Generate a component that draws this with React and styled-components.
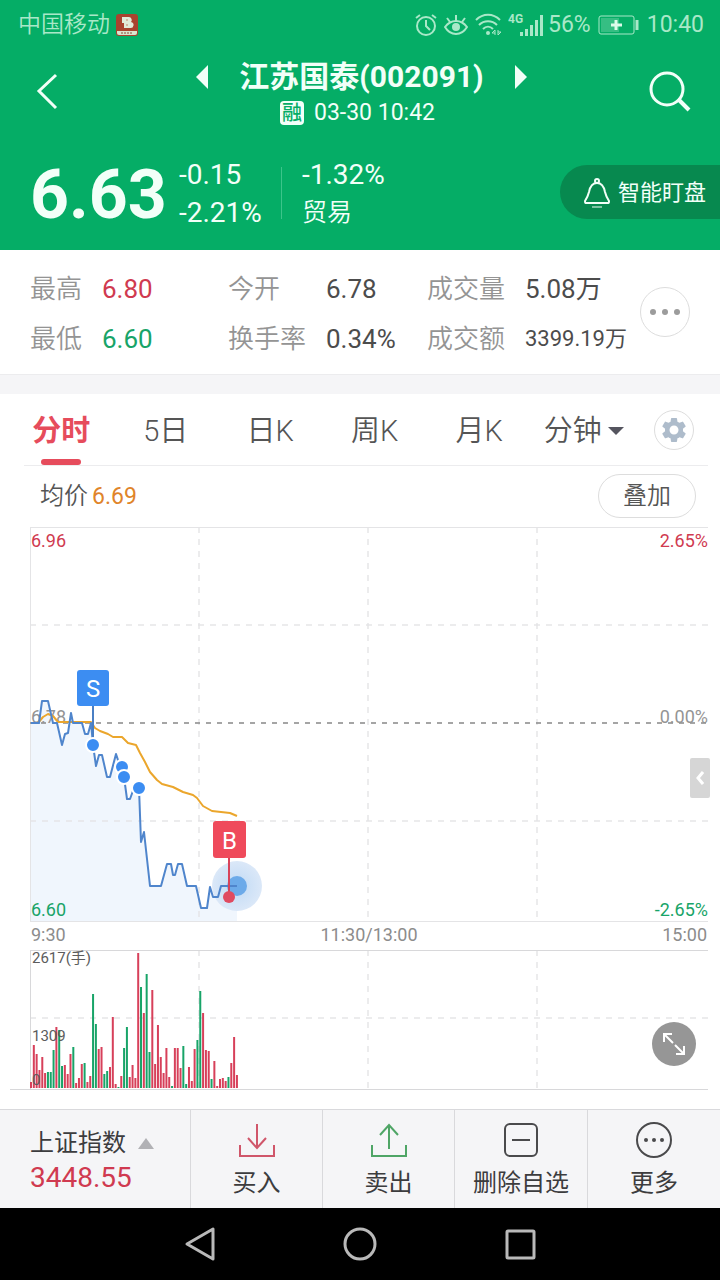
import React, { useState } from 'react';
import styled, { createGlobalStyle } from 'styled-components';
import { MdSettings } from 'react-icons/md';

const color = {
  green: '#05ad66',
  greenDark: '#07894f',
  red: '#d03a50',
  up: '#d7405a',
  down: '#18a468',
  text: '#555555',
  label: '#949494',
  line: '#e4e4e6',
  panel: '#f5f5f7',
};

const GlobalStyle = createGlobalStyle`
  * { box-sizing: border-box; }
  body {
    margin: 0;
    background: #fff;
    color: ${color.text};
    font-family: Roboto, "Noto Sans CJK SC", sans-serif;
  }
  button { border: 0; padding: 0; background: none; color: inherit; font: inherit; cursor: pointer; }
  svg { display: block; }
`;

const Page = styled.div`
  display: flex;
  flex-direction: column;
  min-height: 100vh;
`;

/* ---------- green header ---------- */

const Header = styled.header`
  background: ${color.green};
  color: #f2fff8;
`;

const StatusBar = styled.div`
  display: flex;
  align-items: center;
  justify-content: space-between;
  height: 50px;
  padding: 0 16px 0 18px;
  color: #a9e8c8;
  font-size: 23px;
  line-height: 28px;
`;

const StatusGroup = styled.div`
  display: flex;
  align-items: center;
  gap: ${(p) => p.$gap}px;
  font-weight: ${(p) => (p.$light ? 350 : 400)};
`;

const TitleBar = styled.div`
  display: flex;
  align-items: center;
  justify-content: space-between;
  height: 86px;
  padding: 0 29px 0 36px;
`;

const IconButton = styled.button`
  flex: none;
  width: ${(p) => p.$size}px;
  height: ${(p) => p.$size}px;
`;

const HeaderAction = styled(IconButton)`
  margin-bottom: 4px;
`;

const TitleBlock = styled.div`
  display: flex;
  flex-direction: column;
  align-items: center;
`;

const TitleLine = styled.div`
  display: flex;
  align-items: center;
  gap: 31px;
`;

const Title = styled.h1`
  margin: 0;
  font-size: 30px;
  line-height: 40px;
  font-weight: 700;
`;

const SubLine = styled.div`
  display: flex;
  align-items: center;
  gap: 10px;
  padding-right: 8px;
  font-size: 23px;
  line-height: 32px;
`;

const MarginTag = styled.span`
  width: 24px;
  height: 24px;
  border-radius: 4px;
  background: #f2fff8;
  color: ${color.green};
  font-size: 20px;
  line-height: 24px;
  font-weight: 500;
  text-align: center;
`;

const Quote = styled.div`
  display: flex;
  align-items: center;
  height: 114px;
  padding-left: 30px;
`;

const Price = styled.strong`
  width: 149px;
  padding-top: 4px;
  font-size: 68px;
  line-height: 76px;
  font-weight: 700;
`;

const ChangeColumn = styled.div`
  width: ${(p) => p.$width}px;
  padding-top: 2px;
  font-size: 28px;
  line-height: 38px;
`;

const Industry = styled.div`
  font-size: 25px;
  font-weight: 350;
`;

const Divider = styled.span`
  width: 1px;
  height: 52px;
  margin-right: 20px;
  background: #3cc48a;
`;

const WatchButton = styled.button`
  display: flex;
  align-items: center;
  gap: 8px;
  height: 54px;
  margin: 0 0 2px auto;
  padding: 2px 14px 0 24px;
  border-radius: 27px 0 0 27px;
  background: ${color.greenDark};
  font-size: 22px;
  line-height: 30px;
`;

/* ---------- statistics ---------- */

const Stats = styled.section`
  display: flex;
  align-items: center;
  height: 125px;
  padding: 0 30px;
  border-bottom: 1px solid #ececee;
`;

const StatList = styled.dl`
  flex: 1;
  display: grid;
  grid-template-columns: 72fr 126fr 98fr 101fr 98fr 115fr;
  row-gap: 14px;
  margin: 0;
  padding-top: 4px;
  font-size: 26px;
  line-height: 36px;
  white-space: nowrap;
`;

const StatLabel = styled.dt`
  color: ${color.label};
  font-weight: 350;
`;

const StatValue = styled.dd`
  margin: 0;
  color: ${(p) => p.$color || '#4c4c4c'};
  font-size: ${(p) => (p.$small ? 22 : 26)}px;
`;

const MoreButton = styled.button`
  display: grid;
  place-items: center;
  flex: none;
  width: 50px;
  height: 50px;
  border: 1px solid #dddddd;
  border-radius: 50%;
`;

const Band = styled.div`
  height: 19px;
  background: ${color.panel};
`;

/* ---------- chart ---------- */

const Tabs = styled.nav`
  display: flex;
  align-items: stretch;
  height: 72px;
  margin: 0 12px 0 24px;
  border-bottom: 1px solid #ececee;
`;

const TabList = styled.div`
  flex: 1;
  display: grid;
  grid-template-columns: repeat(6, 1fr);
  margin: 0 4px 0 -15px;
`;

const Tab = styled.button`
  position: relative;
  display: flex;
  align-items: center;
  justify-content: center;
  gap: 6px;
  padding-top: 2px;
  color: ${(p) => (p.$active ? '#e64c5c' : color.text)};
  font-size: 29px;
  line-height: 40px;
  font-weight: ${(p) => (p.$active ? 700 : 350)};
  &::after {
    content: '';
    display: ${(p) => (p.$active ? 'block' : 'none')};
    position: absolute;
    left: calc(50% - 20px);
    bottom: 0;
    width: 40px;
    height: 6px;
    border-radius: 3px;
    background: #e64c5c;
  }
`;

const GearButton = styled.button`
  display: grid;
  place-items: center;
  align-self: center;
  width: 40px;
  height: 40px;
  margin: 0 14px;
  border: 1px solid #dddddd;
  border-radius: 50%;
  color: #aebccb;
`;

const AverageRow = styled.div`
  display: flex;
  align-items: center;
  justify-content: space-between;
  height: 61px;
  padding: 0 24px 0 40px;
  font-size: 24px;
  line-height: 32px;
  font-weight: 350;
`;

const Average = styled.span`
  margin-left: 4px;
  color: #e0842a;
  font-size: 23px;
  font-weight: 400;
`;

const OverlayButton = styled.button`
  height: 44px;
  margin-bottom: 2px;
  padding: 0 24px;
  border: 1px solid #dddddd;
  border-radius: 22px;
`;

const ChartArea = styled.section`
  position: relative;
  padding: 0 12px 0 30px;
  svg text { font-family: Roboto, "Noto Sans CJK SC", sans-serif; }
`;

const Plot = styled.svg`
  width: 100%;
  height: auto;
  overflow: visible;
`;

const TimeAxis = styled.div`
  display: grid;
  grid-template-columns: 1fr auto 1fr;
  align-items: center;
  height: 28px;
  padding: 0 1px 2px;
  color: #8c8c8c;
  font-size: 18px;
  line-height: 24px;
  > :last-child { text-align: right; }
`;

const DrawerHandle = styled.button`
  position: absolute;
  right: 10px;
  top: 231px;
  display: grid;
  place-items: center;
  width: 20px;
  height: 40px;
  border-radius: 2px;
  background: #d6d6d6;
`;

const ExpandButton = styled.button`
  position: absolute;
  right: 24px;
  bottom: 24px;
  display: grid;
  place-items: center;
  width: 44px;
  height: 44px;
  border-radius: 50%;
  background: #969696;
`;

/* ---------- bottom bars ---------- */

const Toolbar = styled.footer`
  display: grid;
  grid-template-columns: 190fr 132fr 132fr 133fr 133fr;
  height: 99px;
  margin-top: auto;
  border-top: 1px solid #d9d9dc;
  background: ${color.panel};
  color: #3c3c3e;
`;

const IndexButton = styled.button`
  padding: 2px 0 0 30px;
  text-align: left;
`;

const IndexName = styled.span`
  display: flex;
  align-items: center;
  gap: 12px;
  font-size: 24px;
  line-height: 36px;
`;

const IndexValue = styled.span`
  display: block;
  color: ${color.red};
  font-size: 28px;
  line-height: 34px;
`;

const Action = styled.button`
  display: flex;
  flex-direction: column;
  align-items: center;
  gap: 6px;
  padding-top: 11px;
  border-left: 1px solid #d9d9dc;
  font-size: 24px;
  line-height: 36px;
`;

const NavBar = styled.nav`
  display: flex;
  align-items: center;
  justify-content: center;
  gap: 120px;
  height: 72px;
  background: #000;
`;

/* ---------- data ---------- */

const stats = [
  { label: '最高', value: '6.80', color: color.red },
  { label: '今开', value: '6.78' },
  { label: '成交量', value: '5.08万' },
  { label: '最低', value: '6.60', color: color.down },
  { label: '换手率', value: '0.34%' },
  { label: '成交额', value: '3399.19万', small: true },
];

const tabs = ['分时', '5日', '日K', '周K', '月K', '分钟'];

const pricePoints =
  '1,196 9,196 12,174 18,174 23,196 27,196 32,218 35,207 38,206 41,186 43,196 52,196 55,207 58,207 61,196 63,218 66,239 69,228 72,228 77,250 80,250 86,227 90,239 94,250 97,272 100,272 104,261 109,261 111,315 114,305 120,359 131,359 137,337 141,337 143,348 145,348 148,337 152,337 157,359 166,359 171,381 177,381 180,360 183,370 188,370 191,359 199,359 207,359';

const averagePoints =
  '1,196 8,196 13,190 18,187 23,189 28,195 37,195 61,195 65,201 70,204 78,207 83,210 92,210 98,216 106,218 110,226 115,235 120,245 127,253 132,257 143,260 153,265 163,268 167,271 173,279 182,284 200,286 207,289';

const tradeDots = [[63, 218], [92, 240], [94, 250], [109, 261]];

const volumes = [
  6, 43, 34, 18, 31, 15, 16, 16, 38, 61, 58, 22, 23, 14, 34, 41, 5, 10, 24, 25, 6, 12, 94, 64, 39,
  41, 14, 17, 21, 71, 4, 1, 12, 40, 61, 11, 23, 10, 135, 101, 75, 114, 36, 98, 24, 63, 31, 15, 40,
  11, 2, 40, 40, 20, 42, 4, 21, 7, 39, 48, 97, 75, 38, 37, 9, 27, 2, 9, 10, 7, 11, 25, 51, 13,
];

const fallingBars = new Set([
  6, 7, 8, 10, 11, 15, 19, 22, 23, 26, 27, 31, 33, 34, 39, 41, 42, 50, 54, 55, 59, 60, 64, 70,
]);

/* ---------- drawings ---------- */

const AppBadge = () => (
  <svg width="22" height="22" viewBox="0 0 22 22" aria-hidden="true">
    <rect width="22" height="22" rx="3" fill="#a9432f" />
    <path d="M1 17h20v2a2 2 0 0 1-2 2H3a2 2 0 0 1-2-2z" fill="#d9e5cf" />
    <path d="M5 19h12" stroke="#8a4a38" strokeWidth="1" strokeDasharray="2 1" />
    <path d="M6 3h7a3 3 0 0 1 2 5 3 3 0 0 1-1 6H8V9H6z" fill="#e2ebda" />
    <path d="M10 6h2M10 11h2" stroke="#c58873" strokeWidth="1" />
  </svg>
);

const AlarmIcon = () => (
  <svg width="22" height="24" viewBox="0 0 22 24" fill="none" stroke="currentColor" strokeWidth="2" aria-hidden="true">
    <circle cx="11" cy="13" r="9" />
    <path d="M11 7v6l4 4M1 5l4-3M21 5l-4-3" />
  </svg>
);

const EyeIcon = () => (
  <svg width="24" height="24" viewBox="0 0 24 24" fill="none" stroke="currentColor" strokeWidth="2" aria-hidden="true">
    <path d="M1 14c3-4 6-6 11-6s8 2 11 6c-3 5-6 7-11 7s-8-2-11-7z" />
    <circle cx="12" cy="14" r="4" fill="currentColor" stroke="none" />
    <path d="M12 8V2M6 9L3 5M18 9l3-4" />
  </svg>
);

const WifiIcon = () => (
  <svg width="26" height="24" viewBox="0 0 26 24" fill="none" stroke="currentColor" strokeWidth="2" aria-hidden="true">
    <path d="M1 7c7-7 17-7 24 0M4 12c5-5 13-5 18 0M8 16c3-3 7-3 10 0" />
    <circle cx="13" cy="20" r="2" fill="currentColor" stroke="none" />
    <path d="M20 22v-5l-3 3h3M23 17v5l3-3h-3" strokeWidth="1" />
  </svg>
);

const SignalIcon = () => (
  <svg width="36" height="26" viewBox="0 0 36 26" fill="currentColor" aria-hidden="true">
    <text x="0" y="11" fontSize="12" fontWeight="700" fontFamily="Roboto, sans-serif">4G</text>
    <rect x="12" y="20" width="3" height="4" />
    <rect x="17" y="17" width="3" height="7" />
    <rect x="22" y="13" width="3" height="11" />
    <rect x="27" y="8" width="3" height="16" />
    <rect x="32" y="3" width="3" height="21" />
  </svg>
);

const BatteryIcon = () => (
  <svg width="42" height="20" viewBox="0 0 42 20" fill="none" aria-hidden="true">
    <rect x="1" y="1" width="35" height="18" rx="2" stroke="currentColor" strokeWidth="1" />
    <rect x="3" y="3" width="18" height="14" fill="currentColor" opacity="0.300" />
    <path d="M18 5v10M13 10h11" stroke="#dcfbea" strokeWidth="3" />
    <path d="M39 5v10" stroke="currentColor" strokeWidth="3" />
  </svg>
);

const BackIcon = () => (
  <svg width="24" height="40" viewBox="0 0 24 40" fill="none" stroke="currentColor" strokeWidth="3" aria-hidden="true">
    <path d="M20 4L3 20l17 17" />
  </svg>
);

const SearchIcon = () => (
  <svg width="44" height="44" viewBox="0 0 44 44" fill="none" stroke="currentColor" aria-hidden="true">
    <circle cx="20" cy="20" r="16" strokeWidth="3" />
    <path d="M31 30l11 11" strokeWidth="4" />
  </svg>
);

const StepIcon = ({ next }) => (
  <svg width="12" height="24" viewBox="0 0 12 24" fill="currentColor" aria-hidden="true">
    <path d={next ? 'M0 0l12 12L0 24z' : 'M12 0L0 12l12 12z'} />
  </svg>
);

const BellIcon = () => (
  <svg width="26" height="30" viewBox="0 0 26 30" fill="none" stroke="currentColor" strokeWidth="2" strokeLinejoin="round" aria-hidden="true">
    <circle cx="13" cy="3" r="2" />
    <path d="M13 5c-5 0-7 4-8 9-1 4-2 6-4 9 0 2 0 2 2 2h20c2 0 2 0 2-2-2-3-3-5-4-9-1-5-3-9-8-9z" />
    <path d="M8 29h10" strokeWidth="1" />
  </svg>
);

const DotsIcon = () => (
  <svg width="32" height="6" viewBox="0 0 32 6" fill="#9c9c9c" aria-hidden="true">
    <circle cx="4" cy="3" r="3" />
    <circle cx="16" cy="3" r="3" />
    <circle cx="28" cy="3" r="3" />
  </svg>
);

const TrayIcon = ({ up }) => (
  <svg width="38" height="38" viewBox="0 0 38 38" fill="none" stroke={up ? '#4fa566' : '#d0566a'} strokeWidth="2" aria-hidden="true">
    <path d="M2 24v11h34V24" />
    <path d={up ? 'M19 28V4M10 14l9-10 9 10' : 'M19 3v24M10 17l9 10 9-10'} />
  </svg>
);

const RemoveIcon = () => (
  <svg width="38" height="38" viewBox="0 0 38 38" fill="none" stroke="#4a4a4c" strokeWidth="2" aria-hidden="true">
    <rect x="3" y="3" width="32" height="32" rx="5" />
    <path d="M10 19h18" />
  </svg>
);

const MoreIcon = () => (
  <svg width="38" height="38" viewBox="0 0 38 38" fill="none" stroke="#4a4a4c" strokeWidth="2" aria-hidden="true">
    <circle cx="19" cy="19" r="17" />
    <g fill="#4a4a4c" stroke="none">
      <circle cx="11" cy="19" r="2" />
      <circle cx="19" cy="19" r="2" />
      <circle cx="27" cy="19" r="2" />
    </g>
  </svg>
);

const Flag = ({ x, y, width, height, fill, letter }) => (
  <g>
    <rect x={x} y={y} width={width} height={height} rx="3" fill={fill} />
    <text x={x + width / 2} y={y + height / 2 + 9} fontSize="24" fill="#fff" textAnchor="middle">
      {letter}
    </text>
  </g>
);

const Grid = ({ height, rows }) => (
  <g fill="none" stroke={color.line} strokeWidth="2" strokeOpacity="0.700" strokeDasharray="6 6">
    {[169, 338, 507].map((x) => (
      <path key={x} d={`M${x} 0V${height}`} />
    ))}
    {rows.map((y) => (
      <path key={y} d={`M0 ${y}H678`} />
    ))}
  </g>
);

const PriceChart = () => (
  <Plot viewBox="0 0 678 395" role="img" aria-label="分时走势">
    <defs>
      <radialGradient id="pulse">
        <stop offset="0" stopColor="#c0daf5" />
        <stop offset="1" stopColor="#dbe8f8" />
      </radialGradient>
    </defs>
    <polygon points={`1,394 ${pricePoints} 207,394`} fill="#f0f6fd" />
    <Grid height={394} rows={[98, 294]} />
    <g shapeRendering="crispEdges" fill={color.line}>
      <rect width="678" height="1" />
      <rect y="394" width="678" height="1" />
      <rect width="1" height="394" />
    </g>
    <path d="M0 196H678" stroke="#8f8f8f" strokeWidth="2" strokeOpacity="0.800" strokeDasharray="5 6" />
    <g fontSize="18">
      <text x="1" y="20" fill={color.red}>6.96</text>
      <text x="678" y="20" fill={color.red} textAnchor="end">2.65%</text>
      <text x="1" y="196" fill={color.label}>6.78</text>
      <text x="678" y="196" fill={color.label} textAnchor="end">0.00%</text>
      <text x="1" y="389" fill={color.down}>6.60</text>
      <text x="678" y="389" fill={color.down} textAnchor="end">-2.65%</text>
    </g>
    <polyline points={averagePoints} fill="none" stroke="#eba62c" strokeWidth="2" strokeLinejoin="round" />
    <circle cx="207" cy="359" r="25" fill="url(#pulse)" />
    <circle cx="207" cy="359" r="10" fill="#6caae9" />
    <polyline points={pricePoints} fill="none" stroke="#4f85cc" strokeWidth="2" strokeLinejoin="round" />
    <path d="M63 178V212" stroke="#4a7fc4" strokeWidth="2" />
    {tradeDots.map(([x, y]) => (
      <circle key={x} cx={x} cy={y} r="7" fill="#3c8df2" stroke="#fff" strokeWidth="2" />
    ))}
    <Flag x={47} y={143} width={32} height={36} fill="#3c8df2" letter="S" />
    <path d="M199 330V366" stroke="#d8435a" strokeWidth="2" />
    <circle cx="199" cy="370" r="6" fill="#e04a60" />
    <Flag x={183} y={294} width={33} height={37} fill="#ef4a5b" letter="B" />
  </Plot>
);

const VolumeChart = () => (
  <Plot viewBox="0 0 678 140" role="img" aria-label="成交量">
    <Grid height={139} rows={[68]} />
    <g shapeRendering="crispEdges" fill="#d8d8da">
      <rect width="678" height="1" />
      <rect x="-20" y="139" width="698" height="1" />
      <rect width="1" height="139" />
    </g>
    {volumes.map((v, i) => (
      <rect
        key={i}
        x={(i * 2821) / 1000}
        y={138 - v}
        width="2"
        height={v}
        fill={fallingBars.has(i) ? color.down : color.up}
      />
    ))}
    <g fontSize="15" fill="#5c5c5c">
      <text x="2" y="13">2617(手)</text>
      <text x="2" y="91">1309</text>
      <text x="2" y="135">0</text>
    </g>
  </Plot>
);

export default function App() {
  const [active, setActive] = useState('分时');

  return (
    <Page>
      <GlobalStyle />

      <Header>
        <StatusBar>
          <StatusGroup $gap={6} $light>
            中国移动
            <AppBadge />
          </StatusGroup>
          <StatusGroup $gap={7}>
            <AlarmIcon />
            <EyeIcon />
            <WifiIcon />
            <StatusGroup $gap={4}>
              <SignalIcon />
              56%
            </StatusGroup>
            <BatteryIcon />
            10:40
          </StatusGroup>
        </StatusBar>

        <TitleBar>
          <HeaderAction $size={40} aria-label="返回">
            <BackIcon />
          </HeaderAction>
          <TitleBlock>
            <TitleLine>
              <button aria-label="上一只">
                <StepIcon />
              </button>
              <Title>江苏国泰(002091)</Title>
              <button aria-label="下一只">
                <StepIcon next />
              </button>
            </TitleLine>
            <SubLine>
              <MarginTag>融</MarginTag>
              03-30 10:42
            </SubLine>
          </TitleBlock>
          <HeaderAction $size={44} aria-label="搜索">
            <SearchIcon />
          </HeaderAction>
        </TitleBar>

        <Quote>
          <Price>6.63</Price>
          <ChangeColumn $width={102}>
            <div>-0.15</div>
            <div>-2.21%</div>
          </ChangeColumn>
          <Divider />
          <ChangeColumn $width={90}>
            <div>-1.32%</div>
            <Industry>贸易</Industry>
          </ChangeColumn>
          <WatchButton>
            <BellIcon />
            智能盯盘
          </WatchButton>
        </Quote>
      </Header>

      <Stats>
        <StatList>
          {stats.map((s) => (
            <React.Fragment key={s.label}>
              <StatLabel>{s.label}</StatLabel>
              <StatValue $color={s.color} $small={s.small}>
                {s.value}
              </StatValue>
            </React.Fragment>
          ))}
        </StatList>
        <MoreButton aria-label="更多指标">
          <DotsIcon />
        </MoreButton>
      </Stats>

      <Band />

      <Tabs>
        <TabList>
          {tabs.map((t) => (
            <Tab key={t} $active={t === active} onClick={() => setActive(t)}>
              {t}
              {t === '分钟' && (
                <svg width="16" height="8" viewBox="0 0 16 8" aria-hidden="true">
                  <path d="M0 0h16L8 8z" fill="#55555f" />
                </svg>
              )}
            </Tab>
          ))}
        </TabList>
        <GearButton aria-label="设置">
          <MdSettings size={30} />
        </GearButton>
      </Tabs>

      <AverageRow>
        <span>
          均价
          <Average>6.69</Average>
        </span>
        <OverlayButton>叠加</OverlayButton>
      </AverageRow>

      <ChartArea>
        <PriceChart />
        <TimeAxis>
          <span>9:30</span>
          <span>11:30/13:00</span>
          <span>15:00</span>
        </TimeAxis>
        <VolumeChart />
        <DrawerHandle aria-label="展开侧栏">
          <svg width="8" height="14" viewBox="0 0 8 14" fill="none" stroke="#fff" strokeWidth="3" aria-hidden="true">
            <path d="M7 1L2 7l5 6" />
          </svg>
        </DrawerHandle>
        <ExpandButton aria-label="全屏">
          <svg width="24" height="24" viewBox="0 0 24 24" fill="none" stroke="#fff" strokeWidth="2" aria-hidden="true">
            <path d="M2 10V2h8M2 2l9 9M22 14v8h-8M22 22l-9-9" />
          </svg>
        </ExpandButton>
      </ChartArea>

      <Toolbar>
        <IndexButton>
          <IndexName>
            上证指数
            <svg width="16" height="11" viewBox="0 0 16 11" aria-hidden="true">
              <path d="M8 0l8 11H0z" fill="#b1b1b5" />
            </svg>
          </IndexName>
          <IndexValue>3448.55</IndexValue>
        </IndexButton>
        <Action>
          <TrayIcon />
          买入
        </Action>
        <Action>
          <TrayIcon up />
          卖出
        </Action>
        <Action>
          <RemoveIcon />
          删除自选
        </Action>
        <Action>
          <MoreIcon />
          更多
        </Action>
      </Toolbar>

      <NavBar>
        <IconButton $size={40} aria-label="系统返回">
          <svg width="40" height="40" viewBox="0 0 40 40" fill="none" stroke="#b9b9b9" strokeWidth="3" strokeLinejoin="round" aria-hidden="true">
            <path d="M33 5v30L7 20z" />
          </svg>
        </IconButton>
        <IconButton $size={40} aria-label="主屏幕">
          <svg width="40" height="40" viewBox="0 0 40 40" fill="none" stroke="#b9b9b9" strokeWidth="3" aria-hidden="true">
            <circle cx="20" cy="20" r="15" />
          </svg>
        </IconButton>
        <IconButton $size={40} aria-label="最近任务">
          <svg width="40" height="40" viewBox="0 0 40 40" fill="none" stroke="#b9b9b9" strokeWidth="3" strokeLinejoin="round" aria-hidden="true">
            <rect x="7" y="7" width="27" height="27" rx="1" />
          </svg>
        </IconButton>
      </NavBar>
    </Page>
  );
}
